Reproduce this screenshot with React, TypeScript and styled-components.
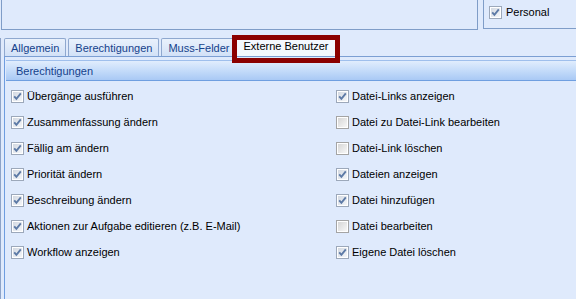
import * as React from 'react';
import styled, { createGlobalStyle } from 'styled-components';

const GlobalStyle = createGlobalStyle`
	html, body {
		margin: 0;
		padding: 0;
		background: #dfeafc;
	}
	body {
		font-family: 'Liberation Sans', Arial, sans-serif;
		font-size: 11px;
		color: #000;
	}
`;

const Page = styled.div`
	width: 576px;
	height: 299px;
	overflow: hidden;
	background: #dfeafc;
	display: flex;
	flex-direction: column;
`;

const TopRow = styled.div`
	display: flex;
	gap: 5px;
	height: 30px;
	padding-left: 1px;
`;

const InfoBox = styled.div`
	flex: none;
	width: 475px;
	height: 29px;
	border: 1px solid #7f9dc8;
	border-top: none;
`;

const SideBox = styled.div`
	flex: none;
	width: 120px;
	height: 29px;
	box-sizing: border-box;
	border: 1px solid #7f9dc8;
	border-top: none;
	display: flex;
	align-items: center;
	gap: 4px;
	padding: 0 0 4px 5px;
`;

const Lower = styled.div`
	flex: 1;
	display: flex;
	flex-direction: column;
	margin-top: 8px;
	padding-left: 3px;
	border-left: 1px solid #8da3c8;
`;

const TabStrip = styled.div`
	display: flex;
	align-items: flex-end;
	gap: 2px;
	height: 18px;
`;

const Tab = styled.div<{ $active?: boolean }>`
	position: relative;
	height: ${(p) => (p.$active ? '20px' : '18px')};
	box-sizing: border-box;
	padding: ${(p) => (p.$active ? '0 6px 1px 7px' : '0 6px')};
	margin-left: ${(p) => (p.$active ? '-3px' : '0')};
	display: flex;
	align-items: center;
	border: 1px solid #8fa8cf;
	border-bottom: none;
	border-radius: 2px 2px 0 0;
	background: ${(p) =>
		p.$active ? '#f4f8fe' : 'linear-gradient(#e9f1fc, #d2e1f7)'};
	color: ${(p) => (p.$active ? '#000' : '#15428b')};
	white-space: nowrap;

	${(p) =>
		p.$active &&
		`
		&::after {
			content: '';
			position: absolute;
			top: -2px;
			left: -5px;
			right: -5px;
			bottom: -7px;
			border: 5px solid #8b0000;
			pointer-events: none;
		}
	`}
`;

const Panel = styled.div`
	flex: 1;
	border-top: 1px solid #7c9fd3;
	border-left: 1px solid #6e9de0;
	padding: 3px 0 0 1px;
	display: flex;
	flex-direction: column;
`;

const PanelHeader = styled.div`
	height: 19px;
	border-top: 1px solid #9fbfec;
	border-bottom: 1px solid #6f9fe0;
	background: linear-gradient(#e1edfd, #c2daf9 55%, #a9c9f5);
	color: #15428b;
	display: flex;
	align-items: center;
	padding-left: 10px;
`;

const Columns = styled.div`
	display: grid;
	grid-template-columns: 325px 1fr;
	padding: 2px 0 0 5px;
`;

const Column = styled.div`
	display: flex;
	flex-direction: column;
`;

const Row = styled.label`
	height: 26px;
	display: flex;
	align-items: center;
	gap: 3px;
	white-space: nowrap;
`;

const Box = styled.svg`
	flex: none;
	display: block;
`;

const Check = ({ checked }: { checked?: boolean }) => (
	<Box width="13" height="13" viewBox="0 0 13 13">
		<defs>
			<linearGradient id={checked ? 'cbOn' : 'cbOff'} x1="0" y1="0" x2="1" y2="1">
				<stop offset="0" stopColor={checked ? '#d3d9e2' : '#d6d6d6'} />
				<stop offset="1" stopColor={checked ? '#f4f6f9' : '#f7f7f7'} />
			</linearGradient>
		</defs>
		<rect x="0.5" y="0.5" width="12" height="12" fill="#fff" stroke={checked ? '#9ca8ba' : '#a4a4a4'} />
		<rect x="2" y="2" width="9" height="9" fill={`url(#${checked ? 'cbOn' : 'cbOff'})`} />
		{checked && (
			<path d="M3.2 6.3 L5.4 8.8 L9.8 3.4" fill="none" stroke="#5d7aa6" strokeWidth="1.9" />
		)}
	</Box>
);

const LEFT = [
	{ label: 'Übergänge ausführen', checked: true },
	{ label: 'Zusammenfassung ändern', checked: true },
	{ label: 'Fällig am ändern', checked: true },
	{ label: 'Priorität ändern', checked: true },
	{ label: 'Beschreibung ändern', checked: true },
	{ label: 'Aktionen zur Aufgabe editieren (z.B. E-Mail)', checked: true },
	{ label: 'Workflow anzeigen', checked: true },
];

const RIGHT = [
	{ label: 'Datei-Links anzeigen', checked: true },
	{ label: 'Datei zu Datei-Link bearbeiten', checked: false },
	{ label: 'Datei-Link löschen', checked: false },
	{ label: 'Dateien anzeigen', checked: true },
	{ label: 'Datei hinzufügen', checked: true },
	{ label: 'Datei bearbeiten', checked: false },
	{ label: 'Eigene Datei löschen', checked: true },
];

const TABS = ['Allgemein', 'Berechtigungen', 'Muss-Felder', 'Externe Benutzer'];

export default function App() {
	return (
		<>
			<GlobalStyle />
			<Page>
				<TopRow>
					<InfoBox />
					<SideBox>
						<Check checked />
						<span>Personal</span>
					</SideBox>
				</TopRow>
				<Lower>
					<TabStrip>
						{TABS.map((t, i) => (
							<Tab key={t} $active={i === 3}>
								{t}
							</Tab>
						))}
					</TabStrip>
					<Panel>
						<PanelHeader>Berechtigungen</PanelHeader>
						<Columns>
							<Column>
								{LEFT.map((r) => (
									<Row key={r.label}>
										<Check checked={r.checked} />
										{r.label}
									</Row>
								))}
							</Column>
							<Column>
								{RIGHT.map((r) => (
									<Row key={r.label}>
										<Check checked={r.checked} />
										{r.label}
									</Row>
								))}
							</Column>
						</Columns>
					</Panel>
				</Lower>
			</Page>
		</>
	);
}
